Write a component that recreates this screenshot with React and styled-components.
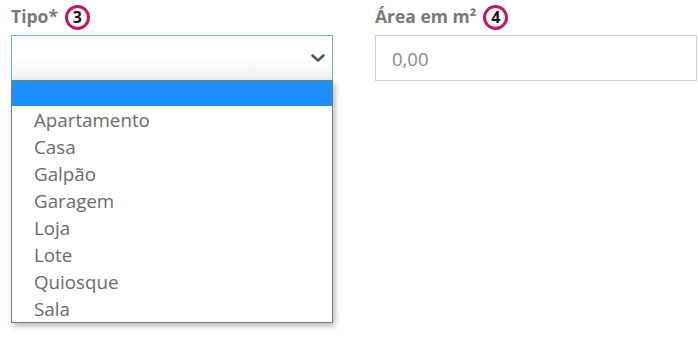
import React from "react";
import styled, { createGlobalStyle } from "styled-components";

const Global = createGlobalStyle`
  html, body { margin: 0; padding: 0; background: #fff; }
  body { font-family: "Open Sans", "Noto Sans", sans-serif; }
`;

const Page = styled.div`
  display: flex;
  gap: 42px;
  padding: 4px 0 0 11px;
  width: 698px;
  height: 342px;
  box-sizing: border-box;
  overflow: hidden;
`;

const Field = styled.div`
  position: relative;
  display: flex;
  flex-direction: column;
  width: ${(p) => p.$width}px;
  flex-shrink: 0;
`;

const LabelRow = styled.div`
  display: flex;
  align-items: center;
  gap: 7px;
  height: 26px;
  margin-bottom: 5px;
`;

const Label = styled.span`
  font-size: 17.5px;
  font-weight: 700;
  color: #7a7a7a;
  line-height: 1;
`;

const Badge = styled.span`
  width: 19px;
  height: 19px;
  border: 3px solid #c8145e;
  border-radius: 50%;
  display: flex;
  align-items: center;
  justify-content: center;
  font-size: 16px;
  font-weight: 700;
  color: #111;
  line-height: 1;
`;

const SelectBox = styled.div`
  height: 46px;
  box-sizing: border-box;
  border: 1px solid #5ec6a4;
  background: linear-gradient(#ffffff 50%, #efefef);
  display: flex;
  align-items: center;
  justify-content: flex-end;
  padding-right: 6px;
`;

const InputBox = styled.div`
  height: 46px;
  box-sizing: border-box;
  border: 1px solid #cfcfcf;
  display: flex;
  align-items: center;
  padding-left: 16px;
  font-size: 18.5px;
  color: #8a8a8a;
`;

const Dropdown = styled.ul`
  position: absolute;
  top: 76px;
  left: 0;
  right: 0;
  margin: 0;
  padding: 0;
  list-style: none;
  background: #fff;
  border: 1px solid #7a7a7a;
  box-shadow: 2px 3px 6px rgba(0, 0, 0, 0.28);
`;

const Option = styled.li`
  height: ${(p) => (p.$selected ? 25 : 27)}px;
  display: flex;
  align-items: center;
  padding-left: 22px;
  font-size: 18.75px;
  color: #6b6b6b;
  background: ${(p) => (p.$selected ? "#1e8fff" : "transparent")};
`;

const options = ["Apartamento", "Casa", "Galpão", "Garagem", "Loja", "Lote", "Quiosque", "Sala"];

export default function App() {
  return (
    <>
      <Global />
      <Page>
        <Field $width={322}>
          <LabelRow>
            <Label>Tipo*</Label>
            <Badge>3</Badge>
          </LabelRow>
          <SelectBox>
            <svg width="16" height="10" viewBox="0 0 16 10">
              <path d="M2.5 2.5 L8 7.5 L13.5 2.5" fill="none" stroke="#555" strokeWidth="2.6" strokeLinecap="round" strokeLinejoin="round" />
            </svg>
          </SelectBox>
          <Dropdown>
            <Option $selected>&nbsp;</Option>
            {options.map((o) => (
              <Option key={o}>{o}</Option>
            ))}
          </Dropdown>
        </Field>
        <Field $width={322}>
          <LabelRow>
            <Label>Área em m²</Label>
            <Badge>4</Badge>
          </LabelRow>
          <InputBox>0,00</InputBox>
        </Field>
      </Page>
    </>
  );
}
